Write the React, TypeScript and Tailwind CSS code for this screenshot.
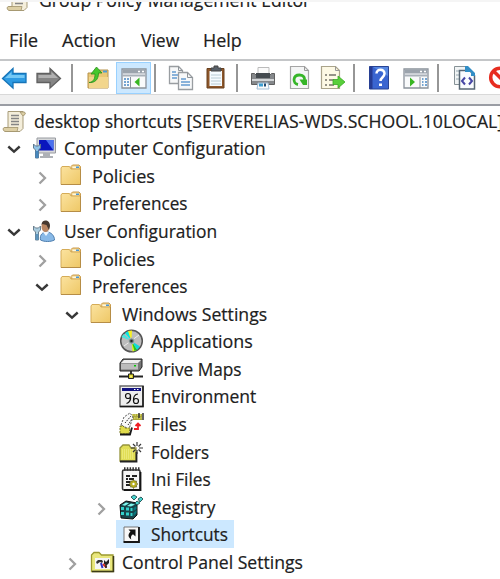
import { useLayoutEffect, useRef, useState } from "react";
import type { ReactNode } from "react";

/** Single-line label, condensed or widened to the given advance width. */
function Label({ text, width }: { text: string; width: number }) {
  const ref = useRef<HTMLSpanElement>(null);
  const [scale, setScale] = useState(1);
  useLayoutEffect(() => {
    if (ref.current) setScale(width / ref.current.offsetWidth);
  }, [text, width]);
  return (
    <span className="flex shrink-0" style={{ width }}>
      <span
        ref={ref}
        className="inline-block shrink-0 origin-left whitespace-nowrap"
        style={{ transform: `scaleX(${scale})` }}
      >
        {text}
      </span>
    </span>
  );
}

function Svg({ children, className = "" }: { children: ReactNode; className?: string }) {
  return (
    <svg viewBox="0 0 26 26" className={`h-[26px] w-[26px] shrink-0 ${className}`} fill="none">
      {children}
    </svg>
  );
}

function Scroll() {
  return (
    <Svg>
      <path d="M7 3.500h15l2 2-2 2v13l-3 3H5c-3 0-3-4 0-4h2z" fill="#f4eedb" stroke="#a79b79" />
      <path d="M19 4h4c2 0 1.500 4-1.500 3.500zM3 19.500h14l-1 4H5c-3 0-3.500-3-2-4z" fill="#ddcfa5" stroke="#a0926b" strokeWidth=".8" />
      <path d="M10 7.500h8M10 10.500h8M10 13.500h8M10 16.500h8" stroke="#858585" strokeWidth="1.300" />
    </Svg>
  );
}

function Folder() {
  return (
    <Svg>
      <defs>
        <linearGradient id="folder" x2="1" y2="1">
          <stop stopColor="#fbe3a0" />
          <stop offset="1" stopColor="#eec765" />
        </linearGradient>
      </defs>
      <path d="M12 6V3.500L13.500 2H20l1.500 1.500V6z" fill="#f1cf85" stroke="#c99b4c" />
      <path d="M13.500 3.500h6.500v2h-6.500z" fill="#fff8df" />
      <path d="M17 3.500h3V5h-3z" fill="#4b97d2" />
      <path d="M2 5 3 3.500h7.500L12 6h9.500v15.500H2z" fill="url(#folder)" stroke="#d5ac58" />
      <path d="M2 21.500h19.500V6" stroke="#b68d46" />
    </Svg>
  );
}

function Computer() {
  return (
    <Svg>
      <path d="M6 3h18.500v15H6z" fill="#d7d8da" stroke="#989ba0" />
      <path d="M8 5h14.500v10.500H8z" fill="#0a16bd" />
      <path d="m15 5 7.500 10.500V5z" fill="#4a71ee" />
      <path d="M12 18h7v3h3v2H9v-2h3z" fill="#aeb1b6" />
      <path d="M2.500 9v4l2 2v8h3v-8l2-2V9L7.500 11h-3z" fill="#8fc3e8" stroke="#60798d" />
      <path d="M4.500 16h3v7h-3z" fill="#4787bd" />
    </Svg>
  );
}

function User() {
  return (
    <Svg>
      <path d="M9.500 22c-1-5 2-8 6-8 5 0 8 4 8 8-4 2-10 2-14 0z" fill="#88b9e7" stroke="#507fae" />
      <path d="m12 14 3 4 3-4z" fill="#eef7ff" />
      <ellipse cx="14.500" cy="8.500" rx="4" ry="5.500" fill="#b88460" />
      <path d="M10.500 7c0-6 8.500-6 8.500 1l-1 4-2.500-5-4-1z" fill="#46382f" />
      <path d="M2.500 8v4l2 2v8h3v-8l2-2V8L7.500 10h-3z" fill="#a9ccdf" stroke="#6b7f8e" />
      <path d="M4.500 16h3v6h-3z" fill="#5c94bc" />
    </Svg>
  );
}

function Disc() {
  return (
    <Svg>
      <circle cx="13.500" cy="13" r="10.800" fill="#bcbcbc" stroke="#555" strokeWidth="1.500" />
      <path d="M13.500 13 7 5l3.500-2z" fill="#05e7e5" />
      <path d="m13.500 13-3.500-10 4-.500z" fill="#f6ee23" />
      <path d="M13.500 13 3.500 9l2-3z" fill="#47e7df" />
      <path d="m13.500 13 4.500 9.500-3.500 1z" fill="#e3ef1c" />
      <path d="m13.500 13 8.500 5.500-3 3.500z" fill="#12dada" />
      <path d="m13.500 13 5.500 9-2.500 1z" fill="#25c91c" />
      <path d="m6 18 15-11" stroke="#eee" />
      <circle cx="13.500" cy="13" r="3" fill="#708686" stroke="#bbb" />
      <circle cx="13.500" cy="13" r="1.200" fill="#222" />
    </Svg>
  );
}

function Drive() {
  return (
    <Svg>
      <path d="m2 7 3-4h19v8l-3 4H2z" fill="#767676" stroke="#222" />
      <path d="m3 7 3-3h17l-3 3z" fill="#eee" />
      <path d="M3 7.500h17v6H3z" fill="#bcbcbc" />
      <path d="M16 9h2v1.500h-2z" fill="#00c900" />
      <path d="M13 15v4M1 20.500h24" stroke="#222" strokeWidth="1.800" />
      <path d="M10.500 18h5v4.500h-5z" fill="#d2c71c" stroke="#222" />
      <path d="M12 19.500h2v2h-2z" fill="#f6f27c" />
    </Svg>
  );
}

function Environment() {
  return (
    <Svg>
      <path d="M2 3h23v20.500H2z" fill="#eee" stroke="#686868" strokeWidth="1.500" />
      <path d="M25 3v20.500H2" stroke="#171717" strokeWidth="1.500" />
      <path d="M4 5h19v3H4z" fill="#121280" />
      <path d="M16 6.500h1.500M19 6.500h1.500" stroke="#fff" />
      <circle cx="10" cy="13" r="2.500" stroke="#111" strokeWidth="1.200" />
      <path d="M12.500 12.500c.500 4-.5 7-4 8" stroke="#111" strokeWidth="1.200" />
      <circle cx="18" cy="18" r="2.500" stroke="#111" strokeWidth="1.200" />
      <path d="M20 11c-3 0-5 3-4.500 7" stroke="#111" strokeWidth="1.200" />
    </Svg>
  );
}

function Files() {
  return (
    <Svg>
      <path d="M14 3h10v6h-9z" fill="#aba838" />
      <path d="M14 4h10M16 7h8" stroke="#f1ed86" strokeDasharray="1.500 1" />
      <path d="M21 2v5M25 2v7" stroke="#333" strokeWidth="1.500" />
      <path d="m3 14 3-8 6-4 3 4-4 12z" fill="#fafafa" stroke="#555" strokeDasharray="2 1.300" />
      <path d="m7 12 6-7M10 14l4-6" stroke="#333" strokeDasharray="1.500 1" />
      <path d="M2 15h3l2 2h5l-1 6H2z" fill="#e0db4b" stroke="#77751d" strokeDasharray="2 1" />
      <path d="M2 23.500h10l2-7" stroke="#191919" strokeWidth="1.800" />
      <path d="M16 18h4v-4M17.500 15l2.500-2.500 2.500 2.500" stroke="#ee1e25" strokeWidth="1.800" />
    </Svg>
  );
}

function NewFolder() {
  return (
    <Svg>
      <path d="M2 9 5 6h6l2 3h5v13H2z" fill="#e1de56" stroke="#96943c" strokeWidth="1.300" />
      <path d="M4 11h12M4 13h12M4 15h12M4 17h12M4 19h12" stroke="#f4f295" strokeDasharray="1 1" />
      <path d="M2 22.500h16.500V13" stroke="#222" strokeWidth="1.800" />
      <path d="M19 3v4M19 11v4M13 9h4M21 9h4M15 5l2.500 2.500M23 5l-2.500 2.500M15 13l2.500-2.500M23 13l-2.500-2.500" stroke="#383838" strokeWidth="1.200" />
    </Svg>
  );
}

function IniFile() {
  return (
    <Svg>
      <rect x="4.500" y="4" width="17.500" height="20" rx="1.500" fill="#f5f5f5" stroke="#333" strokeWidth="1.600" />
      <path d="M22.500 6v18H6" stroke="#151515" strokeWidth="1.800" />
      <path d="M6 3h16" stroke="#333" strokeWidth="3.500" strokeDasharray="1.500 1.300" />
      <path d="M8 10h4M14 10h5M8 13h2M11 13h5M8 16h4M8 19h4" stroke="#222" strokeWidth="1.800" />
      <path d="m15.500 13.500 1 1.600 2-.100-.100 2 1.500 1-1.500 1.100.100 2-2-.100-1 1.500-1-1.500-2 .100.100-2-1.500-1.100 1.500-1-.100-2 2 .100z" fill="#b8b022" stroke="#555212" strokeWidth=".6" />
      <circle cx="15.500" cy="18" r="1.200" fill="#fff" />
    </Svg>
  );
}

function Registry() {
  return (
    <Svg>
      <path d="m2 11 6-4 11 2v12l-4 4-12-1z" fill="#18444a" stroke="#111" />
      <path d="m4 11 4-2.500 3 .8-4 2.500zM9 12l4-2.500 4 1-4 2z" fill="#80f6ed" />
      <path d="M3 13h3v3H3zM8 13.500h3v3H8zM12.500 14h2v3h-2zM3 18h3v3H3zM8 18.500h3v3H8zM12.500 19h2v3h-2z" fill="#33d2cc" />
      <path d="m15.500 14 3-2v3l-3 2zM15.500 19l3-3v3l-3 3z" fill="#08767b" />
      <path d="m13 3 3-2 3 2-3 3zM20 5l3-2 2 2-3 3zM17 9l2-2 3 2-3 2z" fill="#45d4ce" stroke="#244e50" strokeWidth=".9" />
    </Svg>
  );
}

function Shortcut() {
  return (
    <Svg>
      <path d="M6 6h14.500v14.500H6z" fill="#f8f8f8" stroke="#777" />
      <path d="M21 6v15H5.500" stroke="#171717" strokeWidth="1.800" />
      <path d="M10.500 8.500h7v7L15 13.200c-2 1.300-2.500 2.800-1.700 5.300C9.500 16 10 13 12.500 10.800z" fill="#111" />
    </Svg>
  );
}

function ControlPanel() {
  return (
    <Svg>
      <path d="M2.500 6 5 3.500h5L12.500 6H24v16.500H2.500z" fill="#e9e77d" stroke="#9b992f" strokeWidth="1.300" />
      <path d="M3 22.500h21.500V7" stroke="#3c3b18" strokeWidth="1.500" />
      <path d="M6 9h15v11H6z" fill="#f5f5f5" />
      <path d="m7 13 2-2h4l1 1.500-1 1.500-2-1-3 2z" fill="#333" />
      <path d="m15 11 2 2 3-3v4l-2 2-3-1z" fill="#222" />
      <path d="m14 15 3.500 3.500" stroke="#d32a23" strokeWidth="2" />
      <path d="m12 14 1.500 5" stroke="#3131c2" strokeWidth="2" />
      <path d="M17 15v4" stroke="#222" strokeWidth="1.500" />
    </Svg>
  );
}

function Chevron({ open }: { open: boolean }) {
  return (
    <svg viewBox="0 0 30 26" className="h-[26px] w-[30px] shrink-0" fill="none">
      {open ? (
        <path d="m7.300 11.500 5.700 5.200 5.700-5.200" stroke="#383838" strokeWidth="2.400" />
      ) : (
        <path d="m10.500 9.500 5.500 5.500-5.500 5.500" stroke="#a0a0a0" strokeWidth="2.300" />
      )}
    </svg>
  );
}

type Node = {
  text: string;
  width: number;
  indent: string;
  icon: ReactNode;
  open?: boolean;
  branch?: boolean;
  selected?: boolean;
};

const nodes: Node[] = [
  { text: "desktop shortcuts [SERVERELIAS-WDS.SCHOOL.10LOCAL]", width: 469, indent: "pl-[1px]", icon: <Scroll /> },
  { text: "Computer Configuration", width: 202, indent: "pl-[1px]", icon: <Computer />, branch: true, open: true },
  { text: "Policies", width: 63, indent: "pl-[29px]", icon: <Folder />, branch: true },
  { text: "Preferences", width: 95, indent: "pl-[29px]", icon: <Folder />, branch: true },
  { text: "User Configuration", width: 153, indent: "pl-[1px]", icon: <User />, branch: true, open: true },
  { text: "Policies", width: 63, indent: "pl-[29px]", icon: <Folder />, branch: true },
  { text: "Preferences", width: 95, indent: "pl-[29px]", icon: <Folder />, branch: true, open: true },
  { text: "Windows Settings", width: 145, indent: "pl-[59px]", icon: <Folder />, branch: true, open: true },
  { text: "Applications", width: 102, indent: "pl-[118px]", icon: <Disc /> },
  { text: "Drive Maps", width: 91, indent: "pl-[118px]", icon: <Drive /> },
  { text: "Environment", width: 105, indent: "pl-[118px]", icon: <Environment /> },
  { text: "Files", width: 36, indent: "pl-[118px]", icon: <Files /> },
  { text: "Folders", width: 58, indent: "pl-[118px]", icon: <NewFolder /> },
  { text: "Ini Files", width: 60, indent: "pl-[118px]", icon: <IniFile /> },
  { text: "Registry", width: 64, indent: "pl-[88px]", icon: <Registry />, branch: true },
  { text: "Shortcuts", width: 77, indent: "pl-[116px]", icon: <Shortcut />, selected: true },
  { text: "Control Panel Settings", width: 181, indent: "pl-[59px]", icon: <ControlPanel />, branch: true },
];

function Row({ node }: { node: Node }) {
  return (
    <div className={`flex h-[27.57px] shrink-0 items-center ${node.indent}`}>
      {node.branch && <Chevron open={!!node.open} />}
      <div className={`flex h-full items-center gap-[7px] ${node.selected ? "bg-[#cce8ff] pl-[2px] pr-[6px]" : ""}`}>
        {node.icon}
        <Label text={node.text} width={node.width} />
      </div>
    </div>
  );
}

function Separator({ className }: { className: string }) {
  return <div className={`h-7 w-[2px] shrink-0 bg-[#969696] ${className}`} />;
}

function Arrow({ forward = false }: { forward?: boolean }) {
  return (
    <Svg className={forward ? "ml-[9px] -scale-x-100" : "ml-[1px]"}>
      <path
        d="M1.500 13.500 12 3.500v5h13v9H12v5.500z"
        fill={forward ? "#858585" : "#2e9be3"}
        stroke={forward ? "#606060" : "#1674b8"}
        strokeWidth="1.300"
      />
      <path d="m4 13 6.500-6v3h13v3z" fill={forward ? "#b1b1b1" : "#74c8f5"} />
    </Svg>
  );
}

function PanelWindow({ right = false, className = "" }: { right?: boolean; className?: string }) {
  return (
    <Svg className={className}>
      <path d="M1 4h24v19H1z" fill="#f9fafb" stroke="#8b929b" strokeWidth="1.300" />
      <path d="M1.500 4.500h23v4h-23z" fill="#9ba3ac" />
      <path d="M17 6.500h2M21 6.500h2" stroke="#fff" strokeWidth="1.500" />
      <path d="M1 10.500h24" stroke="#a9b0b8" strokeWidth="2" />
      {right ? (
        <>
          <path d="M17 12v11" stroke="#8b929b" />
          <path d="M19 14h1.500M19 17h1.500M19 20h1.500M22 14h2M22 17h2M22 20h2" stroke="#4888c4" strokeWidth="1.300" />
          <path d="m7 12.500 5 4.500-5 4.500z" fill="#38b622" />
        </>
      ) : (
        <>
          <path d="M9.500 12v11" stroke="#8b929b" />
          <path d="M3 14h2M3 17h2M3 20h2M6 14h2M6 17h2M6 20h2" stroke="#4888c4" strokeWidth="1.300" />
          <path d="m18.500 12.500-5 4.500 5 4.500z" fill="#38b622" />
        </>
      )}
    </Svg>
  );
}

function Toolbar() {
  return (
    <div className="flex h-[33px] shrink-0 items-center bg-white">
      <Arrow />
      <Arrow forward />
      <Separator className="ml-[9px]" />
      <Svg className="ml-[13px]">
        <path d="M2 8h9l2-3h9v18H2z" fill="#e9c774" stroke="#b6924a" />
        <path d="M3 12h19v11H3z" fill="#f2d68d" />
        <path d="M3 17.500C8 17 9 13 9 9H5l5.500-7L16 8h-3.500c0 7-4 10-9.500 9.500z" fill="#47c72c" stroke="#278f1d" strokeWidth=".8" />
        <path d="M17 6.500h4" stroke="#4e9cd4" strokeWidth="2" />
      </Svg>
      <div className="ml-[4px] flex h-8 w-[35px] shrink-0 items-center justify-center border border-[#99d1ff] bg-[#cce8ff]">
        <PanelWindow />
      </div>
      <Separator className="ml-[3px]" />
      <Svg className="ml-[12px]">
        {["M1.500 1.500h9l4 4v13h-13z", "M10.500 7.500h9l5 5v12h-14z"].map((d) => (
          <path key={d} d={d} fill="#f7f8f9" stroke="#999da1" strokeWidth="1.300" />
        ))}
        <path d="M10.500 1.500v4h4M19.500 7.500v5h5" stroke="#8e9499" />
        <path d="M4 7h4M4 10h6M4 13h5M13 14h5M13 17h9M13 20h9" stroke="#669bd0" strokeWidth="1.500" />
      </Svg>
      <Svg className="ml-[9px]">
        <path d="M4 3.500h17V23H4z" fill="#8e572a" stroke="#69401f" />
        <path d="M6.500 6H19v15H6.500z" fill="#f5fbff" />
        <path d="M8 10h10M8 13h10M8 16h10M8 19h10" stroke="#b8cbd4" />
        <path d="M8 6V3h3V1h4v2h3v3z" fill="#59616a" stroke="#444" />
      </Svg>
      <Separator className="ml-[7px]" />
      <Svg className="ml-[12px]">
        <path d="M8 2.500h11V10H8z" fill="#fafafa" stroke="#bbb" />
        <path d="M1.500 8.500h3l3 3h11l3-3h3v11h-23z" fill="#85888b" stroke="#606060" />
        <path d="M6 8h14v5H6z" fill="#454b50" />
        <path d="M2 15h22" stroke="#d3d6d8" strokeWidth="2" />
        <path d="M8 18h10l1 6H7z" fill="#fafafa" stroke="#a3bfd7" />
        <path d="M9 18.500h4v3H9z" fill="#3d9ed2" />
        <path d="M14 18.500h2v3h-2z" fill="#224b73" />
      </Svg>
      <Svg className="ml-[10px]">
        <path d="M4.500 1.500h14l4 4v18h-18z" fill="#f4f5f5" stroke="#a5a5a5" strokeWidth="1.200" />
        <path d="M18.500 1.500v4h4" stroke="#999" />
        <path d="M12 19.500c-5.500-1-5.500-9.500 1.500-9.500 4.500 0 5.500 3 5 6" stroke="#36b528" strokeWidth="2.800" />
        <path d="M13.500 14.500h7.500v5.500h-4z" fill="#36b528" />
      </Svg>
      <Svg className="ml-[7px]">
        <path d="M2.500 1.500h14l4 4v18h-18z" fill="#fdf9e5" stroke="#aaa48b" strokeWidth="1.200" />
        <path d="M16.500 1.500v4h4" stroke="#999" />
        <path d="M6 10h2M10 10h7M6 15h2M10 15h5M6 20h2M10 20h5" stroke="#74716a" strokeWidth="1.500" />
        <path d="M14 14.500h5v-3.500l7 6-7 6v-3.500h-5z" fill="#59cf3b" stroke="#39a925" strokeWidth=".8" />
      </Svg>
      <Separator className="ml-[8px]" />
      <Svg className="ml-[13px]">
        <path d="M1.500 1.500h19v22.500h-19z" fill="#3a65d0" stroke="#294494" />
        <path d="M1.500 1.500h3v22.500h-3z" fill="#263b92" />
        <path d="m5 2 15 0v9z" fill="#5788e2" />
        <path d="M8.500 8.500c0-5 8-5 8 0 0 4-4 4-4 7.500" stroke="#fff" strokeWidth="2.500" />
        <path d="M11 18.500h3V21h-3z" fill="#fff" />
      </Svg>
      <PanelWindow right className="ml-[9px]" />
      <Separator className="ml-[8px]" />
      <Svg className="ml-[14px]">
        <path d="M1.500 1.500h13v18h-13z" fill="#f1f4f5" stroke="#879297" />
        <path d="M3 6h3M3 10h3M3 14h3" stroke="#97aab2" />
        <path d="M6.500 5.500h10l5 5v13.500h-15z" fill="#fafcff" stroke="#586775" strokeWidth="1.500" />
        <path d="M12 1h3l7 7v3h-4V7h-6z" fill="#328ec6" />
        <path d="m12 12.500-3 3.500 3 3.500M16 12.500l3 3.500-3 3.500" stroke="#4747a5" strokeWidth="2" />
      </Svg>
      <Svg className="ml-[8px]">
        <circle cx="13" cy="12.500" r="9.300" fill="#fff" stroke="#e72d20" strokeWidth="3.500" />
        <path d="m6.500 6 13 13" stroke="#e72d20" strokeWidth="3.500" />
      </Svg>
    </div>
  );
}

export default function App() {
  return (
    <div className="flex h-[579px] w-[500px] flex-col overflow-hidden bg-white font-['Open_Sans','Noto_Sans',sans-serif] text-[18.4px] leading-[26px] text-[#202020] [-webkit-text-stroke:0.2px_#202020]">
      <div className="flex h-[22px] shrink-0 items-end overflow-hidden border-t-2 border-[#f5f5f5] pl-[5px]">
        <div className="mb-[9px] flex items-center gap-[8px]">
          <Scroll />
          <Label text="Group Policy Management Editor" width={271} />
        </div>
      </div>
      <nav className="flex h-[36px] shrink-0 items-center pl-[9px]">
        <div className="flex w-[53px]"><Label text="File" width={29} /></div>
        <div className="flex w-[79px]"><Label text="Action" width={54} /></div>
        <div className="flex w-[62px]"><Label text="View" width={38} /></div>
        <div className="flex"><Label text="Help" width={39} /></div>
      </nav>
      <div className="mt-px h-[2px] shrink-0 bg-[#c4c6c8]" />
      <Toolbar />
      <div className="h-[10px] shrink-0 border-t border-[#d9d9d9] bg-[#f0f0f0]" />
      <div className="h-[2px] shrink-0 bg-[#9a9da4]" />
      <main className="flex flex-col pt-[1px]">
        {nodes.map((node, i) => (
          <Row key={i} node={node} />
        ))}
      </main>
    </div>
  );
}
